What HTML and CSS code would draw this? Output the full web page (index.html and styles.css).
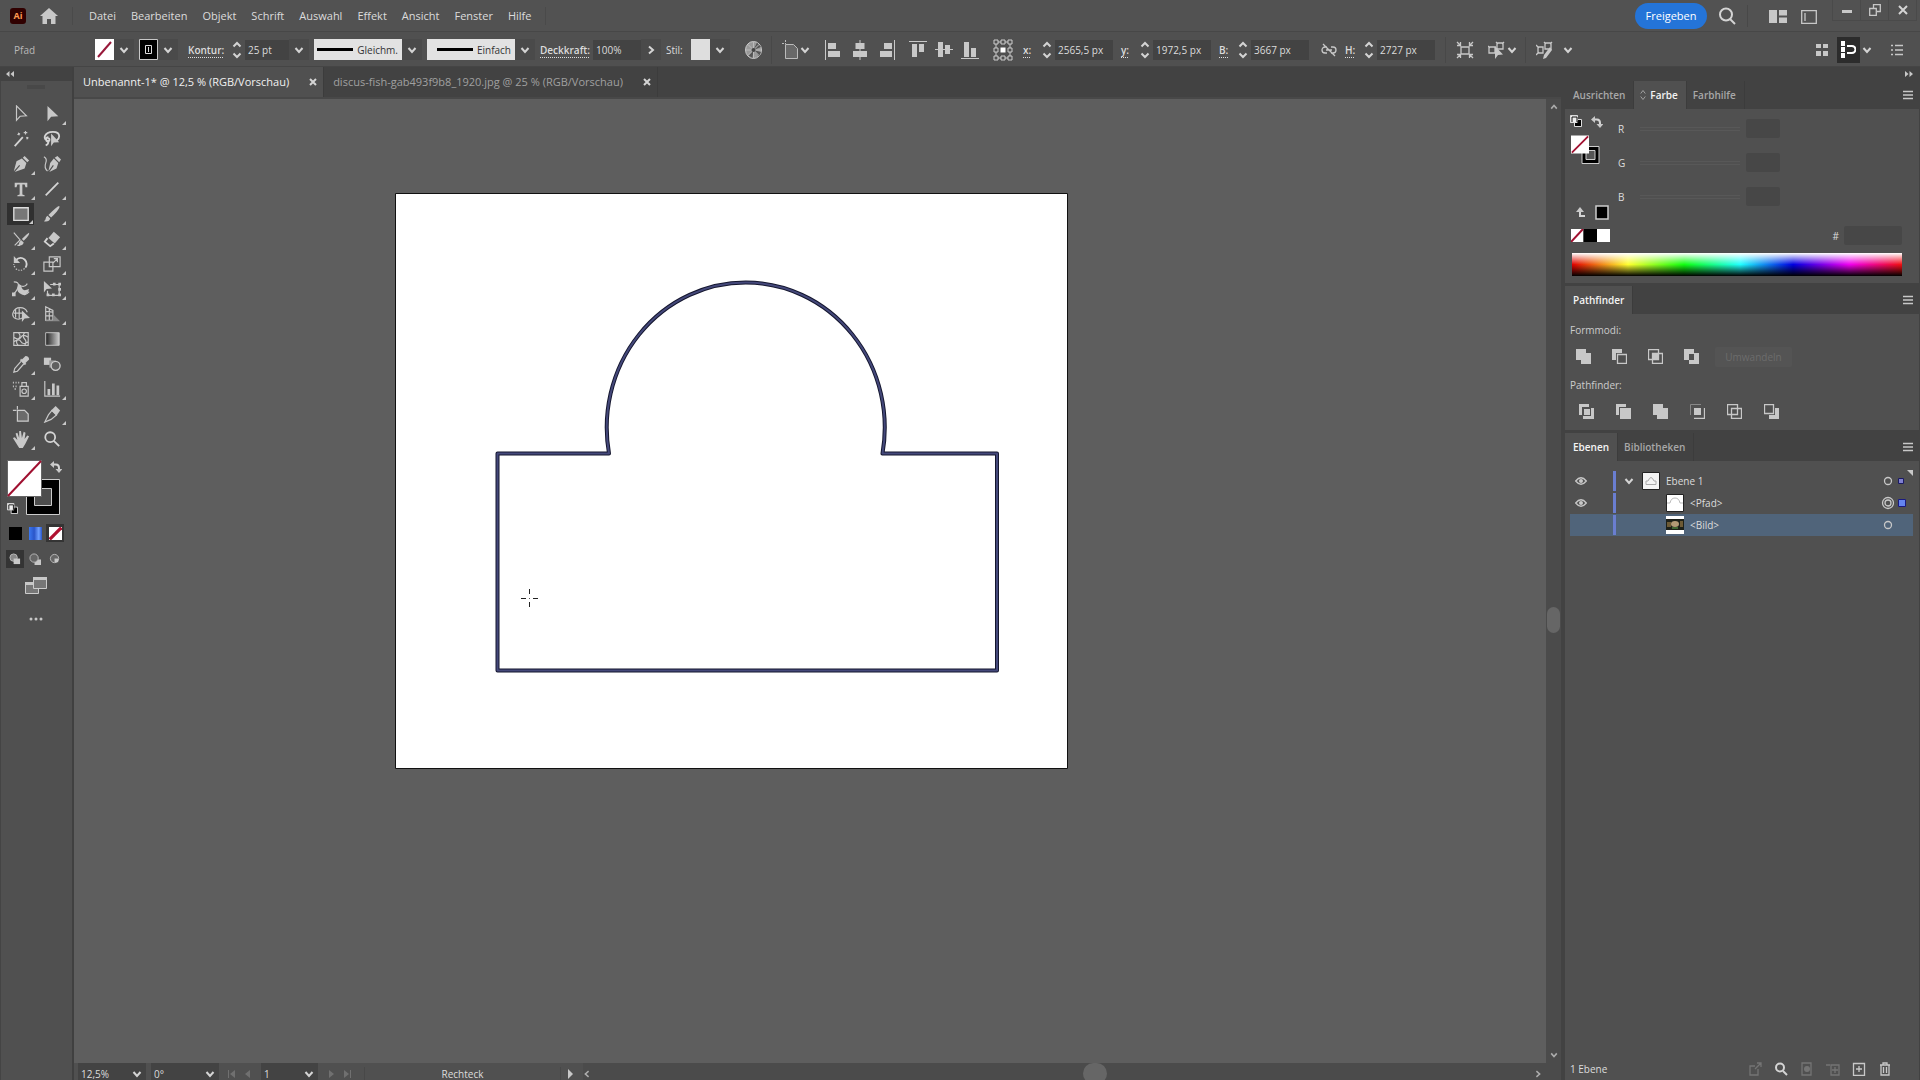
FILE: index.html
```html
<!DOCTYPE html>
<html lang="de">
<head>
<meta charset="utf-8">
<meta name="viewport" content="width=device-width, initial-scale=1">
<title>Unbenannt-1* @ 12,5 % (RGB/Vorschau)</title>
<link rel="stylesheet" href="styles.css">
</head>
<body>
<svg class="sprite" aria-hidden="true">
  <defs>
    <linearGradient id="fade"><stop offset="0" stop-color="#222"/><stop offset="1" stop-color="#ccc"/></linearGradient>
    <linearGradient id="blue"><stop offset="0" stop-color="#3a78f0"/><stop offset=".4" stop-color="#2a55c8"/><stop offset=".75" stop-color="#6fa0ff"/><stop offset="1" stop-color="#2a55c8"/></linearGradient>
  </defs>
  <symbol id="down" viewBox="0 0 10 10"><path class="ln2" d="M1.5 3 5 7l3.500-4"/></symbol>
  <symbol id="spin" viewBox="0 0 10 22"><path class="ln2" d="M1.500 7.500 5 4l3.500 3.500M1.500 14.500 5 18l3.500-3.500"/></symbol>
  <symbol id="none" viewBox="0 0 20 20"><path fill="#fff" d="M0 0h20v20H0z"/><path stroke="#a01030" stroke-width="2" d="M1 19 19 1"/></symbol>
  <symbol id="menu" viewBox="0 0 12 10"><path class="ln" d="M1 1.500h10M1 5h10M1 8.500h10"/></symbol>
  <symbol id="swap" viewBox="0 0 12 12"><path class="ln2" d="M3 3.500h3Q9 3.500 9 7v2"/><path class="fl" d="M0 3.500 4 0v7zM5.500 8h7L9 12z"/></symbol>
  <symbol id="default" viewBox="0 0 12 12"><path fill="#000" stroke="#ddd" d="M4.500 4.500h7v7h-7z"/><path fill="#eee" stroke="#ddd" d="M.5.5h7v7h-7z"/><path fill="none" stroke="#111" d="M2 7V2h5v5h2V5"/></symbol>
  <symbol id="eye" viewBox="0 0 12 8"><path class="ln" d="M.7 4Q6-2.500 11.300 4 6 10.500.7 4z"/><circle class="fl" cx="6" cy="4" r="2"/></symbol>
  <symbol id="cursor" viewBox="0 0 20 20"><path class="fl" d="M5 1v17l4-5 8-.5z"/></symbol>
</svg>

<header class="menubar">
  <span class="app">Ai</span>
  <button class="plain home" aria-label="Start"><svg width="18" height="16" viewBox="0 0 18 16"><path class="fl" d="M9 0 0 8h2.500v8H7v-5h4v5h4.500V8H18z"/></svg></button>
  <nav class="menus">
    <a href="#">Datei</a><a href="#">Bearbeiten</a><a href="#">Objekt</a><a href="#">Schrift</a><a href="#">Auswahl</a><a href="#">Effekt</a><a href="#">Ansicht</a><a href="#">Fenster</a><a href="#">Hilfe</a>
  </nav>
  <button class="share">Freigeben</button>
  <button class="plain find" aria-label="Suchen"><svg width="18" height="18" viewBox="0 0 18 18"><circle class="ln2" cx="8" cy="7.500" r="6"/><path class="ln2" d="m12 12 5 5"/></svg></button>
  <span class="views">
    <button class="plain" aria-label="Arbeitsbereich"><svg width="18" height="13" viewBox="0 0 18 13"><path class="fl" d="M0 0h8v13H0zM10 0h8v5.500h-8zM10 7.500h8V13h-8z"/></svg></button>
    <button class="plain" aria-label="Ansicht"><svg width="16" height="14" viewBox="0 0 16 14"><path class="ln" d="M.7.700h14.600v12.600H.7zM4 3v8"/></svg></button>
  </span>
  <span class="win">
    <button class="plain" aria-label="Minimieren"><svg width="12" height="12" viewBox="0 0 12 12"><path class="fl" d="M1 6h10v3H1z"/></svg></button>
    <button class="plain" aria-label="Wiederherstellen"><svg width="12" height="12" viewBox="0 0 12 12"><path class="ln" d="M.7 4.500h6.600v6.800H.7zM4.500 4V.7h6.800v6.800H8"/></svg></button>
    <button class="plain" aria-label="Schließen"><svg width="12" height="12" viewBox="0 0 12 12"><path class="ln2" d="m2 2 8 8M10 2l-8 8"/></svg></button>
  </span>
</header>

<section class="control" aria-label="Steuerung">
  <span class="kind">Pfad</span>
  <div class="grp">
    <button class="plain" aria-label="Fläche"><svg class="sw" viewBox="0 0 19 21"><path fill="#fff" d="M0 0h19v21H0z"/><path stroke="#98183a" stroke-width="2" d="M3 18 16 3"/></svg></button>
    <button class="chev" aria-label="Flächenfarben"><svg><use href="#down"/></svg></button>
  </div>
  <div class="grp">
    <button class="plain" aria-label="Konturfarbe"><svg class="sw" viewBox="0 0 19 21"><path stroke="#c8c8c8" d="M.5.5h18v20H.5z"/><path fill="#000" stroke="#ddd" d="M6.500 6.500h6v8h-6z"/><path fill="#ddd" d="M9 8h1v5H9z"/></svg></button>
    <button class="chev" aria-label="Konturfarben"><svg><use href="#down"/></svg></button>
  </div>
  <div class="grp lead">
    <label class="under w40" for="weight">Kontur:</label>
    <button class="spin" aria-label="Konturstärke ändern"><svg><use href="#spin"/></svg></button>
    <input class="num w44" id="weight" value="25 pt">
    <button class="chev" aria-label="Stärken"><svg><use href="#down"/></svg></button>
  </div>
  <div class="grp">
    <button class="preview"><svg viewBox="0 0 36 4"><path d="M0 0h36v3H0z"/></svg>Gleichm.</button>
    <button class="chev" aria-label="Profile"><svg><use href="#down"/></svg></button>
  </div>
  <div class="grp">
    <button class="preview"><svg viewBox="0 0 36 4"><path d="M0 0h36v3H0z"/></svg>Einfach</button>
    <button class="chev" aria-label="Pinsel"><svg><use href="#down"/></svg></button>
  </div>
  <div class="grp">
    <label class="under w53" for="opacity">Deckkraft:</label>
    <input class="num w48" id="opacity" value="100%">
    <button class="chev right" aria-label="Deckkraft wählen"><svg><use href="#down"/></svg></button>
  </div>
  <div class="grp">
    <span class="w25">Stil:</span>
    <button class="plain" aria-label="Stil"><svg class="sw" viewBox="0 0 19 21"><path fill="#dedede" d="M0 0h19v21H0z"/></svg></button>
    <button class="chev" aria-label="Stile"><svg><use href="#down"/></svg></button>
  </div>
  <button class="plain globe" aria-label="Bildmaterial neu färben"><svg width="17" height="18" viewBox="0 0 17 18"><ellipse cx="8.500" cy="9" rx="8" ry="8.500" fill="#999" stroke="#c8c8c8"/><path fill="#555" d="M8.500 9 12 1.500 16 6zM8.500 9 16 11l-2 4.500zM8.500 9l-1 8-4-2.500z"/><path stroke="#bbb" fill="none" d="M8.500 1v16M1 9h15M3 3.500l11 11M14 3.500l-11 11"/><circle cx="8.500" cy="9" r="2" fill="#444"/></svg></button>
  <button class="plain split" aria-label="An Auswahl ausrichten"><svg width="16" height="19" viewBox="0 0 16 19"><path fill="#686868" stroke="#bbb" d="M3.500 4.500h8l4 4v10h-12z"/><path stroke="#bbb" stroke-dasharray="2 1" d="M3.500 0v4M0 3.500h4"/></svg><svg width="10" height="10"><use href="#down"/></svg></button>
  <div class="aligns">
    <button class="plain" aria-label="Linksbündig"><svg viewBox="0 0 16 20"><path class="fl" d="M0 0h1v20H0zM3 3h8v6H3zM3 11h12v6H3z"/></svg></button>
    <button class="plain" aria-label="Horizontal zentrieren"><svg viewBox="0 0 16 20"><path class="fl" d="M7.500 0h1v20h-1zM3.500 3h9v6h-9zM1 11h14v6H1z"/></svg></button>
    <button class="plain" aria-label="Rechtsbündig"><svg viewBox="0 0 16 20"><path class="fl" d="M15 0h1v20h-1zM5 3h8v6H5zM1 11h12v6H1z"/></svg></button>
  </div>
  <div class="aligns">
    <button class="plain" aria-label="Oben ausrichten"><svg viewBox="0 0 18 20"><path class="fl" d="M0 1h18v1H0zM3 4h5v13H3zM10 4h5v8h-5z"/></svg></button>
    <button class="plain" aria-label="Vertikal zentrieren"><svg viewBox="0 0 18 20"><path class="fl" d="M0 9h18v1H0zM3 2h5v15H3zM10 5h5v9h-5z"/></svg></button>
    <button class="plain" aria-label="Unten ausrichten"><svg viewBox="0 0 18 20"><path class="fl" d="M0 18h18v1H0zM3 2h5v15H3zM10 8h5v9h-5z"/></svg></button>
  </div>
  <button class="plain ref" aria-label="Bezugspunkt"><svg width="20" height="22" viewBox="0 0 20 22"><path fill="none" stroke="#ccc" d="M1 1h4v4H1zM8 1h4v4H8zM15 1h4v4h-4zM1 9h4v4H1zM15 9h4v4h-4zM1 17h4v4H1zM8 17h4v4H8zM15 17h4v4h-4zM5 3h3M12 3h3M5 19h3M12 19h3M3 5v4M3 13v4M17 5v4M17 13v4"/><path fill="#fff" d="M7.500 8.500h5v5h-5z"/></svg></button>
  <div class="coord"><label class="under" for="cx">x:</label><button class="spin" aria-label="x ändern"><svg><use href="#spin"/></svg></button><input class="num w58" id="cx" value="2565,5 px"></div>
  <div class="coord"><label class="under" for="cy">y:</label><button class="spin" aria-label="y ändern"><svg><use href="#spin"/></svg></button><input class="num w58" id="cy" value="1972,5 px"></div>
  <div class="coord"><label class="under" for="cb">B:</label><button class="spin" aria-label="Breite ändern"><svg><use href="#spin"/></svg></button><input class="num w58" id="cb" value="3667 px"></div>
  <button class="plain link" aria-label="Proportionen"><svg width="16" height="14" viewBox="0 0 16 14"><path class="ln" d="M6 4H4a3 3 0 0 0 0 6h2M10 4h2a3 3 0 0 1 0 6h-2M5 7h6M2 1l12 12"/></svg></button>
  <div class="coord"><label class="under" for="ch">H:</label><button class="spin" aria-label="Höhe ändern"><svg><use href="#spin"/></svg></button><input class="num w58" id="ch" value="2727 px"></div>
  <div class="iso">
    <button class="plain" aria-label="Isolieren"><svg width="18" height="18" viewBox="0 0 18 18"><path class="ln" d="M5 6h8v7H5zM1 1l4 4M17 1l-4 4M1 17l4-4M17 17l-4-4M1 4.500h3.500V1M17 4.500h-3.500V1M1 13.500h3.500V17M17 13.500h-3.500V17"/></svg></button>
    <button class="plain split" aria-label="Ähnliche auswählen"><svg width="17" height="18" viewBox="0 0 17 18"><path class="ln" d="M1 6h6v6H1zM9 2h6v6H9zM0 5l2 2M8 1l2 2M16 1l-2 2"/><path class="fl" d="M7 5v13l3-4 5-.5z"/></svg><svg width="10" height="10"><use href="#down"/></svg></button>
  </div>
  <div class="iso wide">
    <button class="plain split" aria-label="Bearbeiten"><svg width="17" height="18" viewBox="0 0 17 18"><path class="ln" d="M2 6h5v6H2zM9 2h6v6H9zM0 4l3 3M0 14l3-3M8 1l2 2M16 1l-2 2"/><path class="fl" d="m14 6 2 3-6 8-3 1 1-4z"/></svg><svg width="10" height="10"><use href="#down"/></svg></button>
  </div>
  <div class="tail">
    <button class="plain raster" aria-label="Raster"><svg width="12" height="14" viewBox="0 0 12 14"><path class="fl" d="M0 1h5v4H0zM7 1h5v4H7zM0 8h5v5H0zM7 8h5v5H7z"/></svg></button>
    <button class="plain snap" aria-label="An Pixel ausrichten"><svg width="15" height="18" viewBox="0 0 15 18"><path fill="#fff" d="M0 0h4v5H0zM0 6h4v5H0zM0 12h4v5H0z"/><path fill="none" stroke="#fff" stroke-width="2" d="M6 5h5a3 3 0 0 1 0 7H6"/></svg></button>
    <button class="plain" aria-label="Ausrichtungsoptionen"><svg width="10" height="10"><use href="#down"/></svg></button>
    <button class="plain opts" aria-label="Menü"><svg width="12" height="12" viewBox="0 0 12 12"><path class="ln" d="M4 1.500h8M4 6h8M4 10.500h8M0 1.500h2M0 6h2M0 10.500h2"/></svg></button>
  </div>
</section>

<main class="work">
  <aside class="tools">
    <button class="plain collapse" aria-label="Einklappen"><svg width="8" height="6" viewBox="0 0 8 6"><path class="fl" d="M3.500 0v6L0 3zM8 0v6L4.500 3z"/></svg></button>
    <div class="toolpanel">
      <div class="grip"></div>
      <div class="grid">
        <button aria-label="Auswahl"><svg viewBox="0 0 20 20"><path class="ln" d="M5 1v16l4-4.500 7-.5z"/></svg></button>
        <button class="more" aria-label="Direktauswahl"><svg><use href="#cursor"/></svg></button>
        <button aria-label="Zauberstab"><svg viewBox="0 0 20 20"><path class="ln2" d="M3 18 12 8"/><path class="ln" d="m7 3 1 3M6 5l3-1M15 1v4M13 3h4M16 8l2 2M18 8l-2 2"/></svg></button>
        <button aria-label="Lasso"><svg viewBox="0 0 20 20"><path class="ln2" d="M6 12Q1 11 2 7q2-5 9-5t7 5q0 3-3 5M6 8q-3 0-2.500 3T7 12q1-3-2-3M6 13q0 3-3 4"/><path class="fl" d="M9 4v14l3-4 6-.5z"/></svg></button>
        <button class="more" aria-label="Zeichenstift"><svg viewBox="0 0 20 20"><path class="fl" d="m14 1 5 5-2 2-5-5zM11 4l5 5-2 6-11 4 6-7-1-1-6 7L5 7z"/></svg></button>
        <button aria-label="Kurvenzeichner"><svg viewBox="0 0 20 20"><path class="fl" d="m16 1 4 4-2 3-5-5zM12 4l5 5-2 6-8 4 5-7-1-1-5 7 2-9z"/><path class="ln" d="M1 2q4 2 2 7t2 9"/></svg></button>
        <button class="more" aria-label="Text"><svg viewBox="0 0 20 20"><path class="fl" d="M3 3h14v5h-2L14 5h-2.500v11l2.500 1v1H6v-1l2.500-1V5H6L5 8H3z"/></svg></button>
        <button class="more" aria-label="Liniensegment"><svg viewBox="0 0 20 20"><path class="ln2" d="M3 17 17 3"/></svg></button>
        <button class="more on" aria-label="Rechteck"><svg viewBox="0 0 20 20"><path fill="#777" stroke="#ddd" stroke-width="1.500" d="M2 3h16v14H2z"/></svg></button>
        <button class="more" aria-label="Pinsel"><svg viewBox="0 0 20 20"><path class="fl" d="M18 1q2 2-9 13l-3-3Q16 1 18 1zM5 12l3 3q-1 4-7 3 2-1 2-3t2-3z"/></svg></button>
        <button class="more" aria-label="Shaper"><svg viewBox="0 0 20 20"><path class="ln" d="m2 3 7 8-6 6M6 17h3"/><path class="fl" d="M19 3q1 2-6 9l-2-2Q18 3 19 3zM10 11l3 3q-1 4-6 3 1-1 1-3z"/></svg></button>
        <button class="more" aria-label="Radiergummi"><svg viewBox="0 0 20 20"><path class="fl" d="m12 2 7 6-6 7-7-6z"/><path class="ln2" d="m5 9-3 4 6 5 4-3"/></svg></button>
        <button class="more" aria-label="Drehen"><svg viewBox="0 0 20 20"><path class="ln2" d="M4 6q5-5 10-1 4 4 1 9"/><path class="ln" stroke-dasharray="1.500 1.500" d="M14 15q-5 4-10 0-2-3-2-5"/><path class="fl" d="M2 1v8h7z"/></svg></button>
        <button class="more" aria-label="Skalieren"><svg viewBox="0 0 20 20"><path class="ln" d="M7 2h12v11H7zM1 8h10v10H1zM11 9l5-5M12 4h4v4"/></svg></button>
        <button class="more" aria-label="Breite"><svg viewBox="0 0 20 20"><path class="ln" d="M2 2q6 0 5 5t-6 9M9 6q5 3 8-2M9 7q1 8 4 9t6-3"/><path class="fl" d="M7 4q3 1 4 5t8 1q-2 8-8 6T6 9zM0 14h4v4H0z"/></svg></button>
        <button class="more" aria-label="Frei transformieren"><svg viewBox="0 0 20 20"><path class="ln" d="M8 5h10v12H5v-5"/><path class="fl" d="M1 1v13l3-4 6-.5zM11 3h3v3h-3zM17 3h3v3h-3zM17 9h3v3h-3zM17 15h3v3h-3zM10 15h3v3h-3zM4 15h3v3H4z"/></svg></button>
        <button class="more" aria-label="Formerstellung"><svg viewBox="0 0 20 20"><path class="ln" d="M12 14q-4 3-8 1t-3-6q2-6 8-6t8 5M2 9h11M8 4v11M4 5v9"/><path class="fl" d="M11 6v13l3-4 6-.5z"/></svg></button>
        <button class="more" aria-label="Perspektivenraster"><svg viewBox="0 0 20 20"><path class="ln" d="m3 2 8 4v11H3zM3 7l8 1M3 12h8M7 4v13"/><path fill="#888" d="m11 10 8 8H3v-1h8z"/></svg></button>
        <button aria-label="Gitter"><svg viewBox="0 0 20 20"><path class="ln" d="M2 3h16v14H2zM2 8q6 4 8 0t8 0M2 13q6-4 8 0t8 0M7 3q4 4 0 7t0 7M14 3q-3 4 0 7t0 7"/></svg></button>
        <button aria-label="Verlauf"><svg viewBox="0 0 20 20"><path fill="url(#fade)" stroke="#ccc" d="M3 3h15v14H3z"/></svg></button>
        <button class="more" aria-label="Pipette"><svg viewBox="0 0 20 20"><path class="fl" d="M15 1q4 0 4 4l-4 4 1 1-2 1-5-5 1-2 1 1z"/><path class="ln" d="m10 7-7 8-1 4 4-1 7-8"/></svg></button>
        <button aria-label="Angleichen"><svg viewBox="0 0 20 20"><path class="fl" d="M1 3h8v8H1z"/><path fill="#999" d="M7 6h7v8H7z"/><circle cx="14" cy="12" r="5" fill="#606060" stroke="#ccc" stroke-width="1.500"/></svg></button>
        <button class="more" aria-label="Symbol aufsprühen"><svg viewBox="0 0 20 20"><path class="ln" d="M9 7h9v11H9zM11 7V3h5v4"/><circle class="ln" cx="13.500" cy="12.500" r="2.500"/><path class="ln2" stroke-dasharray="1 2" d="M1 3h8M1 7h6M3 10h3"/></svg></button>
        <button class="more" aria-label="Diagramm"><svg viewBox="0 0 20 20"><path class="ln" d="M2 1v17h17"/><path class="fl" d="M5 10h3v7H5zM10 4h3v13h-3zM15 6h3v11h-3z"/></svg></button>
        <button aria-label="Zeichenfläche"><svg viewBox="0 0 20 20"><path fill="#6b6b6b" stroke="#ccc" stroke-width="1.300" d="M6 6h8l4 4v8H6z"/><path class="ln" d="M6 1v4M1 6h4"/></svg></button>
        <button class="more" aria-label="Slice"><svg viewBox="0 0 20 20"><path class="ln" d="m10 6 5 5-6 5-7 3 4-8z"/><path class="fl" d="m14 1 5 5-4 6-6-6z"/></svg></button>
        <button class="more" aria-label="Hand"><svg viewBox="0 0 20 20"><path class="fl" d="m1 9 2-1 3 3L4 4l2-1 2 6 0-8h2l1 8 2-7 2 1-1 7 3-4 2 1-4 8-3 5H8z"/></svg></button>
        <button aria-label="Zoom"><svg viewBox="0 0 20 20"><circle class="ln2" cx="8" cy="8" r="5.500"/><path class="ln2" d="m12 12 6 6"/></svg></button>
      </div>
      <svg class="fillstroke" viewBox="0 0 62 58" role="img" aria-label="Fläche und Kontur">
        <path fill="#000" stroke="#ccc" d="M25.500 21.500h33v35h-33z"/><path fill="#4d4d4d" stroke="#ccc" d="M33.500 30.500h17v17h-17z"/>
        <path fill="#fff" stroke="#666" d="M6.500 2.500h34v36h-34z"/><path stroke="#a01030" stroke-width="2" d="M7 38 40 3"/>
        <use href="#swap" x="49" y="3" width="12" height="12"/><use href="#default" x="6" y="45" width="11" height="11"/>
      </svg>
      <div class="trio">
        <button aria-label="Farbe"><svg viewBox="0 0 13 13"><path d="M0 0h13v13H0z"/></svg></button>
        <button aria-label="Verlauf"><svg viewBox="0 0 13 13"><path fill="url(#blue)" d="M0 0h13v13H0z"/></svg></button>
        <button class="on" aria-label="Ohne"><svg viewBox="0 0 20 20"><path fill="#fff" d="M0 0h20v20H0z"/><path stroke="#b01030" stroke-width="5" d="M1 19 19 1"/></svg></button>
      </div>
      <div class="trio modes">
        <button class="on" aria-label="Normal zeichnen"><svg viewBox="0 0 13 13"><circle cx="5" cy="5" r="4" fill="#888" stroke="#bbb"/><path class="fl" d="M5 6h7v6H5z"/></svg></button>
        <button aria-label="Dahinter zeichnen"><svg viewBox="0 0 13 13"><path class="fl" d="M6 7h7v6H6z"/><circle cx="5.500" cy="5.500" r="4.500" fill="#666" stroke="#bbb"/></svg></button>
        <button aria-label="Innen zeichnen"><svg viewBox="0 0 13 13"><circle cx="6" cy="6" r="4.500" fill="#666" stroke="#bbb"/><path class="fl" d="M6 6h4v4H6z"/></svg></button>
      </div>
      <button class="plain screen" aria-label="Bildschirmmodus"><svg width="22" height="17" viewBox="0 0 22 17"><path fill="#777" stroke="#ccc" d="M.5 5.500h13v11H.5z"/><path fill="#777" stroke="#ccc" d="M8.500.5h13v11h-13z"/><path class="fl" d="M8 0h14v3H8zM0 5h8v3H0z"/></svg></button>
      <button class="plain dots" aria-label="Mehr"><svg width="14" height="4" viewBox="0 0 14 4"><circle class="fl" cx="2" cy="2" r="1.500"/><circle class="fl" cx="7" cy="2" r="1.500"/><circle class="fl" cx="12" cy="2" r="1.500"/></svg></button>
    </div>
  </aside>

  <section class="doc">
    <div class="tabs">
      <div class="tab active"><a href="#">Unbenannt-1* @ 12,5 % (RGB/Vorschau)</a><button class="plain" aria-label="Schließen"><svg width="8" height="8" viewBox="0 0 8 8"><path class="ln2" d="m1 1 6 6M7 1 1 7"/></svg></button></div>
      <div class="tab"><a href="#">discus-fish-gab493f9b8_1920.jpg @ 25 % (RGB/Vorschau)</a><button class="plain" aria-label="Schließen"><svg width="8" height="8" viewBox="0 0 8 8"><path class="ln2" d="m1 1 6 6M7 1 1 7"/></svg></button></div>
    </div>
    <div class="view">
      <div class="canvas">
        <svg class="artboard" width="673" height="576" viewBox="0 0 673 576" role="img" aria-label="Zeichenfläche">
          <path fill="#fff" stroke="#111" d="M.5.5h672v575H.5z"/>
          <path class="shape outer" d="M102.500 260.500H214A139 145 0 1 1 487.500 260.500H602V477.500H102.500z"/>
          <path class="shape inner" d="M102.500 260.500H214A139 145 0 1 1 487.500 260.500H602V477.500H102.500z"/>
          <path stroke="#222" d="M134.500 396v5M134.500 409v5M126 405.500h5M138 405.500h5"/><path fill="#555" d="M134 405h1v1h-1z"/>
        </svg>
      </div>
      <div class="vscroll"><svg class="up" width="8" height="8"><use href="#down"/></svg><span class="thumb"></span><svg width="8" height="8"><use href="#down"/></svg></div>
    </div>
    <footer class="status">
      <span class="sel w68"><select aria-label="Zoom"><option>12,5%</option></select><svg><use href="#down"/></svg></span>
      <span class="sel w68"><select aria-label="Drehung"><option>0°</option></select><svg><use href="#down"/></svg></span>
      <span class="step"><svg viewBox="0 0 10 10"><path d="M1 1h1v8H1zM8 1v8L3 5z"/></svg><svg viewBox="0 0 10 10"><path d="M7 1v8L2 5z"/></svg></span>
      <span class="sel w56"><select aria-label="Zeichenfläche"><option>1</option></select><svg><use href="#down"/></svg></span>
      <span class="step"><svg viewBox="0 0 10 10"><path d="M3 1v8l5-4z"/></svg><svg viewBox="0 0 10 10"><path d="M8 1h1v8H8zM2 1v8l5-4z"/></svg></span>
      <span class="toolname">Rechteck</span>
      <svg class="play" viewBox="0 0 10 10"><path class="fl" d="M3 0v10l5-5z"/></svg>
      <div class="hscroll"><svg class="left" width="8" height="8"><use href="#down"/></svg><span class="thumb"></span><svg class="rightward" width="8" height="8"><use href="#down"/></svg></div>
    </footer>
  </section>

  <aside class="panels">
    <button class="plain collapse end" aria-label="Einklappen"><svg width="8" height="6" viewBox="0 0 8 6"><path class="fl" d="M0 0v6l3.500-3zM4.500 0v6L8 3z"/></svg></button>
    <section>
      <div class="ptabs"><a href="#">Ausrichten</a><a class="active" href="#"><svg width="6" height="10" viewBox="0 0 6 10"><path class="thin" d="m.7 3.500 2.300-3 2.300 3M.7 6.500l2.300 3 2.300-3"/></svg>Farbe</a><a href="#">Farbhilfe</a><button class="plain" aria-label="Bedienfeldmenü"><svg width="12" height="10"><use href="#menu"/></svg></button></div>
      <div class="color">
        <div class="pickers">
          <svg width="40" height="106" viewBox="0 0 40 106" role="img" aria-label="Fläche und Kontur">
            <use href="#default" x="0" y="1" width="12" height="12"/><use href="#swap" x="21" y="2" width="12" height="12"/>
            <path fill="#000" stroke="#ccc" d="M12 32.500h17v17H12z"/><path fill="#555" stroke="#ccc" d="M16 36.500h9v9h-9z"/>
            <use href="#none" x="1" y="21" width="18" height="19"/>
            <path class="ln2" d="M10 103V96M10 102h5"/><path class="fl" d="m6 98 4-5 4 5z"/>
            <path stroke="#ccc" stroke-width="1.500" d="M26 92h12v13H26z"/>
          </svg>
        </div>
        <div class="rgb">
          <label for="r">R</label><input type="range" aria-label="Rot" disabled><input class="box" id="r" disabled>
          <label for="g">G</label><input type="range" class="faint" aria-label="Grün" disabled><input class="box" id="g" disabled>
          <label for="b">B</label><input type="range" aria-label="Blau" disabled><input class="box" id="b" disabled>
        </div>
        <div class="hexrow">
          <svg width="39" height="13" viewBox="0 0 39 13"><path fill="#fff" d="M0 0h12v13H0zM26 0h13v13H26z"/><path d="M13 0h13v13H13z"/><path stroke="#a01030" stroke-width="2" d="M0 13 12 0"/></svg>
          <label for="hex">#</label><input class="box hex" id="hex" disabled>
        </div>
        <div class="spectrum"></div>
      </div>
    </section>
    <section>
      <div class="ptabs"><a class="active" href="#">Pathfinder</a><button class="plain" aria-label="Bedienfeldmenü"><svg width="12" height="10"><use href="#menu"/></svg></button></div>
      <div class="path">
        <h3>Formmodi:</h3>
        <div class="ops shapes">
          <button aria-label="Vereinen"><svg viewBox="0 0 15 15"><path class="fl" d="M0 0h10v4h5v11H5v-4H0z"/></svg></button>
          <button aria-label="Vorderes Objekt abziehen"><svg viewBox="0 0 15 15"><path class="fl" d="M0 0h10v4H4v7H0z"/><path class="ln" d="M5.500 5.500h9v9h-9z"/></svg></button>
          <button aria-label="Schnittmenge bilden"><svg viewBox="0 0 15 15"><path class="ln" d="M.5.5h10v10H.5zM4.500 4.500h10v10h-10z"/><path class="fl" d="M5 5h5v5H5z"/></svg></button>
          <button aria-label="Schnittmenge entfernen"><svg viewBox="0 0 15 15"><path class="fl" fill-rule="evenodd" d="M0 0h10v4h5v11H5v-4H0zM5 5v6h5V5z"/></svg></button>
          <button class="convert" disabled>Umwandeln</button>
        </div>
        <h3>Pathfinder:</h3>
        <div class="ops">
          <button aria-label="Fläche aufteilen"><svg viewBox="0 0 15 15"><path class="fl" d="M0 0h10v3H3v8H0zM12 4h3v11H4v-3h8zM5 5h6v6H5z"/></svg></button>
          <button aria-label="Überlappungsbereich entfernen"><svg viewBox="0 0 15 15"><path class="fl" d="M0 0h10v3H3v8H0zM4 4h11v11H4z"/></svg></button>
          <button aria-label="Verdeckte Fläche entfernen"><svg viewBox="0 0 15 15"><path class="fl" d="M0 0h10v4h5v11H4v-4H0z"/></svg></button>
          <button aria-label="Schnittmengenfläche"><svg viewBox="0 0 15 15"><path fill="none" stroke="#888" d="M.5 11V.5H11"/><path class="ln" d="M14.500 4v10.500H4"/><path class="fl" d="M4 4h7v7H4z"/></svg></button>
          <button aria-label="Kontur aufteilen"><svg viewBox="0 0 15 15"><path class="ln" d="M.5.5h10v10H.5zM4.500 4.500h10v10h-10z"/></svg></button>
          <button aria-label="Hinteres Objekt abziehen"><svg viewBox="0 0 15 15"><path class="fl" d="M11 4h4v11H5v-4h6z"/><path class="ln" d="M.5.5h9v9h-9z"/></svg></button>
        </div>
      </div>
    </section>
    <section class="grow">
      <div class="ptabs"><a class="active" href="#">Ebenen</a><a href="#">Bibliotheken</a><button class="plain" aria-label="Bedienfeldmenü"><svg width="12" height="10"><use href="#menu"/></svg></button></div>
      <ul class="layers">
        <li><svg class="eye"><use href="#eye"/></svg><i class="bar"></i><svg class="open"><use href="#down"/></svg><svg class="thumbnail" viewBox="0 0 18 18"><path fill="#f4f4f4" stroke="#222" d="M.5.5h17v17H.5z"/><path fill="none" stroke="#aaa" d="M4 12.500V9h2q3-7 6 0h2v3.500z"/></svg><span>Ebene 1</span><svg class="target" viewBox="0 0 26 22"><circle class="ln" cx="7" cy="11" r="3.500"/><path fill="#8080d0" stroke="#1a1a60" d="M17.500 8.500h5v5h-5z"/></svg><i class="corner"></i></li>
        <li class="sub"><svg class="eye"><use href="#eye"/></svg><i class="bar"></i><svg class="thumbnail" viewBox="0 0 18 18"><path fill="#fff" stroke="#222" d="M.5.5h17v17H.5z"/><path fill="none" stroke="#bbb" d="M1 9h3q1-5 5-5t5 5h3"/></svg><span>&lt;Pfad&gt;</span><svg class="target" viewBox="0 0 26 22"><circle class="ln" cx="7" cy="11" r="3"/><circle class="ln" cx="7" cy="11" r="5.500"/><path fill="#6484f0" stroke="#1a1a80" d="M17.500 7.500h7v7h-7z"/></svg></li>
        <li class="sub selected"><span class="eye"></span><i class="bar"></i><svg class="thumbnail" viewBox="0 0 18 18"><path fill="#fff" d="M0 0h18v18H0z"/><path fill="#1d2019" d="M0 3h18v11H0z"/><path fill="#6d5a35" d="M1 6h4v5H1zM14 5h3v6h-3z"/><ellipse cx="9" cy="8" rx="4" ry="3" fill="#b39a76"/><path fill="#3f6632" d="M6 11h6v2H6z"/></svg><span>&lt;Bild&gt;</span><svg class="target" viewBox="0 0 26 22"><circle class="ln" cx="7" cy="11" r="3.500"/></svg></li>
      </ul>
      <footer class="pfoot"><span>1 Ebene</span>
        <button class="plain dim" aria-label="Exportieren"><svg viewBox="0 0 14 14"><path class="ln" d="M7 4H2v9h8V7M7 7l6-6M9 1h4v4"/></svg></button>
        <button class="plain" aria-label="Objekt suchen"><svg viewBox="0 0 14 14"><circle class="ln2" cx="6" cy="5.500" r="4"/><path class="ln2" d="m9 9 4 4"/></svg></button>
        <button class="plain dim" aria-label="Schnittmaske"><svg viewBox="0 0 14 14"><path class="ln" d="M2 1h9v12H2z"/><circle class="fl" cx="7" cy="7" r="3"/></svg></button>
        <button class="plain dim" aria-label="Unterebene"><svg viewBox="0 0 14 14"><path class="ln" d="M5 3h8v10H5zM0 3h4M9 5v6M6 8h6"/></svg></button>
        <button class="plain" aria-label="Neue Ebene"><svg viewBox="0 0 14 14"><path class="ln" d="M1.500 1.500h11v12h-11zM7 4v6M4 7h6"/></svg></button>
        <button class="plain" aria-label="Löschen"><svg viewBox="0 0 14 14"><path class="ln" d="M2 3h10M5 3V1h4v2M3 3v10h8V3M5.500 5v6M8.500 5v6"/></svg></button>
      </footer>
    </section>
  </aside>
</main>
</body>
</html>
```
FILE: styles.css
```css
* { box-sizing: border-box; }
body {
  margin: 0;
  height: 100vh;
  display: grid;
  grid-template-rows: 32px 35px minmax(0, 1fr);
  overflow: hidden;
  background: #424242;
  color: #dcdcdc;
  font: 500 10px/14px "Open Sans", "Noto Sans", sans-serif;
}
button, input, select { font: inherit; color: inherit; border: 0; padding: 0; margin: 0; background: none; border-radius: 0; }
a { color: inherit; text-decoration: none; }
svg { display: block; flex: none; }
.sprite { position: absolute; width: 0; height: 0; }
.fl { fill: #c8c8c8; }
.ln { fill: none; stroke: #c8c8c8; stroke-width: 1.3; }
.ln2 { fill: none; stroke: #d4d4d4; stroke-width: 2; }
.thin { fill: none; stroke: #a0a0a0; stroke-width: 1; }
.plain { display: flex; align-items: center; justify-content: center; }

/* menu bar */
.menubar { display: flex; align-items: center; background: #525252; border-bottom: 1px solid #474747; padding: 0 3px 0 10px; }
.app { width: 16px; height: 16px; border-radius: 3px; background: #300000; color: #ff9a50; font-size: 9px; font-weight: 700; line-height: 16px; text-align: center; }
.home { width: 46px; }
.menus { display: flex; align-items: center; gap: 15px; height: 18px; padding: 0 14px 0 16px; border: solid #4a4a4a; border-width: 0 1px; font-size: 11px; }
.share { margin-left: auto; width: 72px; height: 26px; border-radius: 13px; background: #2474d8; color: #fff; font-size: 11px; }
.find { width: 41px; height: 22px; border-right: 1px solid #484848; }
.views { display: flex; width: 84px; justify-content: space-evenly; padding: 2px 0 0 6px; }
.win { display: flex; align-self: flex-start; border: solid #4a4a4a; border-width: 0 0 1px 1px; }
.win button { width: 28px; height: 20px; border-right: 1px solid #4a4a4a; }

/* control bar */
.control { display: flex; align-items: center; background: #505050; border-bottom: 1px solid #454545; padding: 1px 0 0 14px; }
.kind { width: 81px; color: #b8b8b8; }
.grp { display: flex; align-items: center; padding-right: 5px; }
.lead { padding-left: 5px; }
.sw { width: 19px; height: 21px; }
.chev { width: 20px; height: 21px; display: grid; place-items: center; background: #4a4a4a; }
.chev svg { width: 10px; height: 10px; }
.chev.right svg { transform: rotate(-90deg); }
.spin { width: 16px; height: 22px; display: grid; place-items: center; }
.spin svg { width: 10px; height: 22px; }
.num { height: 20px; padding-left: 3px; background: #434343; }
.under { text-decoration: underline dotted; text-underline-offset: 3px; font-weight: 600; }
.w25 { width: 25px; } .w40 { width: 41px; } .w44 { width: 44px; } .w48 { width: 48px; }
.w53 { width: 53px; } .w56 { width: 57px; } .w58 { width: 58px; } .w68 { width: 68px; }
.preview { display: flex; align-items: center; justify-content: flex-end; gap: 4px; width: 88px; height: 21px; padding-right: 4px; background: #e2e2e2; color: #333; }
.preview svg { width: 36px; height: 4px; }
.globe { width: 37px; height: 28px; border-right: 1px solid #484848; }
.split { gap: 2px; }
.globe + .split { width: 48px; }
.aligns { display: flex; gap: 11px; padding: 0 5px; }
.aligns svg { width: 16px; height: 20px; }
.aligns + .aligns { gap: 8px; padding-left: 9px; }
.aligns + .aligns svg { width: 18px; }
.ref { width: 37px; }
.coord { display: flex; align-items: center; width: 98px; padding-left: 2px; }
.coord .under { width: 16px; }
.link { width: 28px; }
.link + .coord { width: 102px; }
.iso { display: flex; gap: 14px; padding: 4px 8px 4px 10px; border-left: 1px solid #484848; }
.wide .split { gap: 10px; }
.tail { display: flex; align-items: center; gap: 2px; margin-left: auto; padding-right: 16px; }
.raster { padding-right: 7px; }
.snap { width: 23px; height: 26px; background: #2c2c2c; }
.opts { padding-left: 16px; }
.opts svg { width: 14px; }

.work { display: grid; grid-template-columns: 74px minmax(0, 1fr) 359px; min-height: 0; }

/* tools */
.tools { display: flex; flex-direction: column; border-right: 2px solid #404040; }
.collapse { width: 20px; height: 14px; }
.collapse.end { margin-left: auto; }
.toolpanel { flex: 1; display: flex; flex-direction: column; align-items: flex-start; background: #505050; border-left: 1px solid #444; }
.grip { width: 18px; height: 4px; margin: 4px 26px 12px; background: #484848; }
.grid { display: grid; grid-template-columns: 31px 31px; grid-auto-rows: 25px; padding-left: 4px; }
.grid button { position: relative; display: grid; place-items: center; }
.grid svg { width: 18px; height: 18px; }
.grid .on { background: #303030; width: 27px; height: 22px; place-self: center; }
.more::after { content: ""; position: absolute; right: 1px; bottom: 1px; border: 2px solid; border-color: transparent #c8c8c8 #c8c8c8 transparent; }
.fillstroke { width: 62px; height: 58px; margin-top: 7px; }
.trio { display: flex; padding: 8px 0 0 5px; gap: 2px; }
.trio button { width: 18px; height: 18px; display: grid; place-items: center; }
.trio svg { width: 13px; height: 13px; }
.trio .on { background: #343434; }
.modes svg { width: 12px; height: 12px; }
.screen { width: 70px; padding-top: 9px; }
.dots { width: 70px; padding-top: 23px; }

/* document */
.doc { display: grid; grid-template-rows: 32px minmax(0, 1fr) 17px; min-width: 0; }
.tabs { display: flex; border-bottom: 2px solid #484848; font-size: 11px; }
.tab { display: flex; align-items: center; gap: 20px; padding: 0 6px 0 9px; color: #a0a0a0; border-right: 1px solid #3c3c3c; }
.tab.active { background: #505050; color: #f0f0f0; }
.view { display: flex; min-height: 0; }
.canvas { position: relative; flex: 1; overflow: hidden; background: #5e5e5e; }
.artboard { position: absolute; left: 321px; top: 94px; }
.shape { fill: none; stroke-linejoin: round; }
.outer { stroke: #14162e; stroke-width: 4px; }
.inner { stroke: #44487a; stroke-width: 2px; }
.vscroll { width: 15px; background: #4b4b4b; display: flex; flex-direction: column; align-items: center; padding: 4px 0; }
.vscroll .up { transform: rotate(180deg); margin-bottom: auto; }
.vscroll .thumb { width: 13px; height: 26px; margin: 78px 0 auto; }
.vscroll svg, .hscroll svg { opacity: .7; }
.thumb { border-radius: 12px; background: #666; }
.status { display: flex; align-items: center; height: 21px; background: #505050; padding-left: 4px; }
.sel { display: grid; align-items: center; margin-right: 5px; height: 21px; background: #434343; }
.sel > * { grid-area: 1 / 1; }
.sel select { appearance: none; width: 100%; height: 21px; padding-left: 3px; }
.sel svg { width: 10px; height: 10px; margin-right: 4px; justify-self: end; pointer-events: none; }
.step { display: flex; gap: 6px; width: 37px; padding-left: 3px; }
.step svg { width: 10px; height: 10px; fill: #707070; }
.toolname { width: 197px; margin-left: 4px; text-align: center; border: solid #484848; border-width: 0 1px; }
.play { width: 10px; height: 10px; margin: 0 8px 0 4px; }
.hscroll { flex: 1; display: flex; align-items: center; height: 21px; padding: 0 19px 0 0; background: #4b4b4b; }
.hscroll .left { transform: rotate(90deg); margin-right: auto; }
.hscroll .rightward { transform: rotate(-90deg); }
.hscroll .thumb { width: 24px; height: 21px; margin: 0 auto 0 64px; }

/* panels */
.panels { display: flex; flex-direction: column; padding: 0 1px 0 4px; }
.panels > section { background: #505050; margin-bottom: 3px; }
.panels > .grow { flex: 1; display: flex; flex-direction: column; margin: 0; }
.ptabs { display: flex; align-items: center; height: 28px; background: #424242; font-weight: 600; color: #a8a8a8; }
.ptabs a { display: flex; align-items: center; gap: 4px; height: 28px; padding: 0 8px; border-right: 1px solid #3c3c3c; }
.ptabs a + a { padding: 0 8px 0 6px; }
.ptabs .active { background: #505050; color: #f4f4f4; }
.ptabs button { margin-left: auto; padding-right: 5px; }
.color { display: grid; grid-template-columns: 48px 1fr; padding: 5px 17px 7px 5px; }
.rgb { display: grid; grid-template-columns: 16px 100px 34px; column-gap: 6px; row-gap: 15px; align-content: start; align-items: center; padding-top: 5px; }
.rgb input[type="range"] { appearance: none; width: 100px; height: 4px; border: solid #585858; border-width: 1px 0; }
.rgb .faint { border-color: #525252; }
input[type="range"]::-webkit-slider-thumb { appearance: none; width: 0; height: 0; }
.box { width: 34px; height: 19px; border-radius: 2px; background: #474747; }
.hexrow { grid-column: 1 / 3; display: flex; align-items: center; padding: 6px 0 8px 1px; }
.hexrow label { margin-left: auto; padding-right: 5px; }
.hex { width: 58px; }
.spectrum {
  grid-column: 1 / 3;
  height: 23px;
  margin-left: 2px;
  background:
    linear-gradient(#fff, transparent 50%, #000),
    linear-gradient(90deg, #e00000, #ffff30 17%, #10ff10 34%, #20ffff 51%, #0000e0 67%, #f000f0 84%, #f01010);
}
.path { height: 116px; padding: 9px 0 0 5px; }
h3 { margin: 0; font-size: 10px; line-height: 14px; font-weight: 500; color: #ccc; }
.ops { display: flex; align-items: center; gap: 22px; height: 21px; margin: 9px 0 11px; padding-left: 9px; }
.ops svg { width: 15px; height: 15px; }
.shapes { gap: 21px; padding-left: 6px; }
.shapes .convert { width: 77px; height: 20px; margin-left: -5px; background: #545454; color: #6c6c6c; border-radius: 2px; }
.layers { list-style: none; flex: 1; margin: 0; padding: 9px 6px 0 5px; }
.layers li { position: relative; display: flex; align-items: center; height: 22px; }
.layers .eye { width: 12px; height: 8px; margin: 0 26px 0 5px; }
.bar { width: 3px; height: 20px; background: #6a7ed0; }
.open { width: 10px; height: 10px; margin: 0 8px; }
.thumbnail { width: 18px; height: 18px; }
.sub .thumbnail { margin-left: 50px; }
.layers span:not(.eye) { margin-left: 6px; }
.target { width: 26px; height: 22px; margin-left: auto; margin-right: 6px; }
.selected { background: #50647a; }
.corner { position: absolute; right: 0; top: 0; border: 3px solid; border-color: #c8c8c8 #c8c8c8 transparent transparent; }
.pfoot { display: flex; align-items: center; gap: 12px; height: 22px; padding: 0 27px 0 5px; }
.pfoot span { margin-right: auto; }
.pfoot svg { width: 14px; height: 14px; }
.dim { opacity: .3; }
```
